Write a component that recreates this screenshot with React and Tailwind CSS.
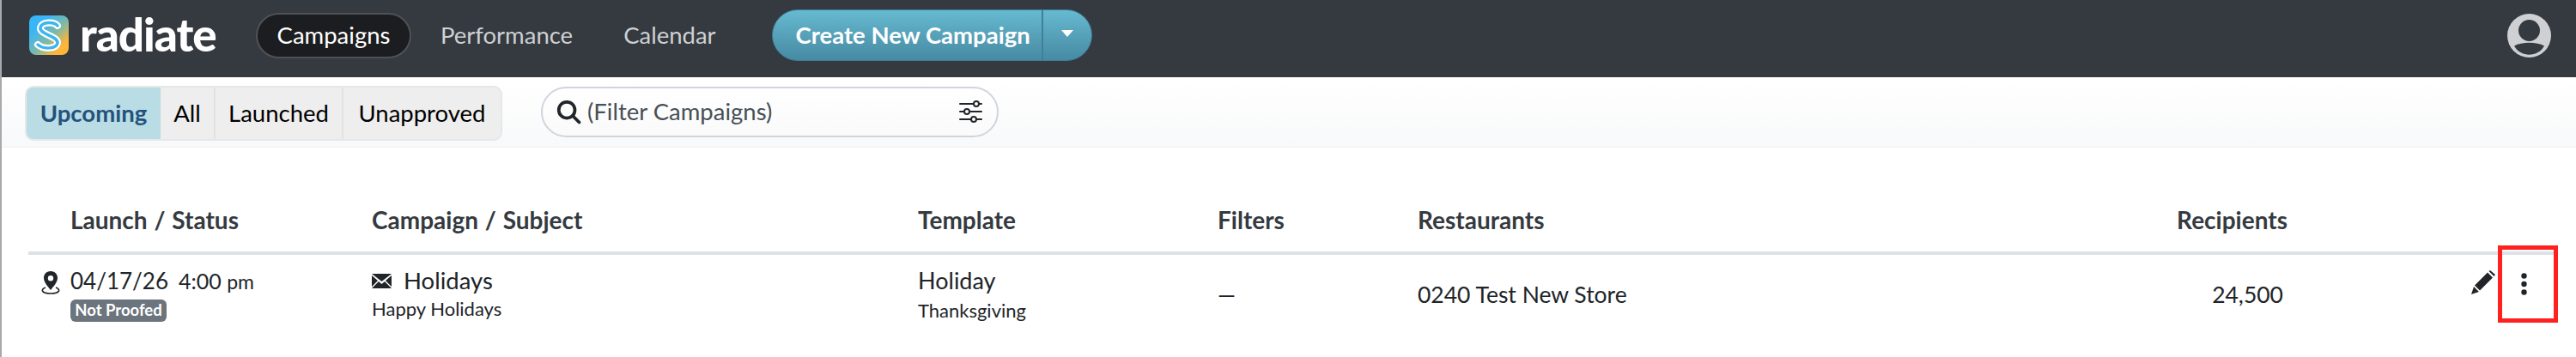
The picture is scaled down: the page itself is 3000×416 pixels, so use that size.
import React from "react";

function Logo() {
  return (
    <svg width="46" height="46" viewBox="0 0 46 46" className="shrink-0">
      <defs>
        <linearGradient id="lg" x1="0" y1="0" x2="1" y2="1">
          <stop offset="0.25" stopColor="#38b6f8" />
          <stop offset="0.55" stopColor="#7fb9a6" />
          <stop offset="0.8" stopColor="#fdb53a" />
        </linearGradient>
      </defs>
      <rect width="46" height="46" rx="8" fill="url(#lg)" />
      <path d="M33 12 C29 7 15 7 13 14 C11 22 34 24 33 32 C32 39 17 40 10 34" fill="none" stroke="#fff" strokeWidth="8" strokeLinecap="round" />
      <path d="M33 12 C29 7 15 7 13 14 C11 22 34 24 33 32 C32 39 17 40 10 34" fill="none" stroke="#3fb5ee" strokeWidth="3.5" strokeLinecap="round" />
    </svg>
  );
}

function Tab({ children, className }) {
  return <div className={"flex items-center justify-center h-full text-[27.5px] " + className}>{children}</div>;
}

function HeadCell({ className, children }) {
  return <div className={"font-bold text-[28px] text-[#343a40] " + className}>{children}</div>;
}

export default function App() {
  return (
    <div className="w-[3000px] h-[416px] bg-white overflow-hidden border-l-2 border-[#a9a9ad] font-['Lato',sans-serif] text-[#212529]">
      <header className="h-[90px] bg-[#343a40] flex items-center relative">
        <div className="ml-[32px] flex items-center mb-[8px]">
          <Logo />
          <span className="ml-[13px] text-white text-[53px] leading-none font-black tracking-[-1px] w-[157px] -mt-[4px]">radiate</span>
        </div>
        <nav className="flex items-center ml-[48px] text-[#ced0d3] text-[27.5px]">
          <div className="w-[181px] h-[53px] rounded-full bg-[#1c1d20] border-2 border-[#4f5256] text-white flex items-center justify-center -mt-[8px]">Campaigns</div>
          <div className="ml-[34px] -mt-[8px]">Performance</div>
          <div className="ml-[59px] -mt-[8px]">Calendar</div>
        </nav>
        <div className="ml-[65px] w-[373px] h-[60px] -mt-[8px] rounded-full flex bg-gradient-to-b from-[#66bad0] to-[#478aa3] border border-[#3f7f98] text-white text-[27.5px] font-bold">
          <div className="w-[315px] flex items-center justify-center border-r-2 border-[#3f819b] pl-[14px]">Create New Campaign</div>
          <div className="flex-1 flex items-center justify-center">
            <div className="w-0 h-0 border-l-[7px] border-r-[7px] border-t-[8px] border-l-transparent border-r-transparent border-t-white -mt-[4px]" />
          </div>
        </div>
        <svg className="ml-auto mr-[29px] -mt-[8px]" width="51" height="51" viewBox="0 0 51 51">
          <circle cx="25.5" cy="25.5" r="25.5" fill="#ced0d3" />
          <circle cx="25.5" cy="19.5" r="12.5" fill="#343a40" />
          <path d="M8 37.5 C17 32.5 34 32.5 43 37.5 C36 51 15 51 8 37.5 Z" fill="#343a40" />
        </svg>
      </header>

      <div className="h-[82px] bg-gradient-to-b from-white to-[#f8f9fa] border-b border-[#f0f1f2] flex items-center pl-[27px]">
        <div className="w-[556px] h-[64px] mt-[2px] rounded-[10px] bg-[#eeeeee] border-2 border-[#e6e7e8] flex items-center overflow-hidden">
          <Tab className="w-[156px] bg-[#b9dce5] text-[#23527c] font-bold">Upcoming</Tab>
          <Tab className="w-[64px] border-r-2 border-[#e2e2e2] text-black">All</Tab>
          <Tab className="w-[149px] border-r-2 border-[#e2e2e2] text-black">Launched</Tab>
          <Tab className="flex-1 text-black">Unapproved</Tab>
        </div>
        <div className="ml-[45px] w-[533px] h-[59px] rounded-full border-2 border-[#d0d5dc] flex items-center pl-[15px] pr-[16px] -mt-[1px] bg-gradient-to-b from-white to-[#fafafa]">
          <svg width="30" height="30" viewBox="0 0 24 24" fill="none" stroke="#212529" strokeWidth="3" strokeLinecap="round">
            <circle cx="10.5" cy="10.5" r="7.5" />
            <path d="M16 16 L22 22" />
          </svg>
          <span className="ml-[7px] text-[27.5px] text-[#495057]">(Filter Campaigns)</span>
          <svg className="ml-auto" width="28" height="26" viewBox="0 0 28 26" fill="none" stroke="#212529" strokeWidth="2" strokeLinecap="round">
            <path d="M1 4 H26 M1 13 H26 M1 22 H26" />
            <circle cx="20" cy="4" r="3" fill="#fff" strokeWidth="2" />
            <circle cx="9" cy="13" r="3" fill="#fff" strokeWidth="2" />
            <circle cx="17" cy="22" r="3" fill="#fff" strokeWidth="2" />
          </svg>
        </div>
      </div>

      <div className="ml-[31px] w-[2942px]">
        <div className="h-[125px] flex items-end border-b-4 border-[#dee2e6] pb-[16px] relative">
          <HeadCell className="ml-[49px] w-[351px] whitespace-pre [word-spacing:1px]">Launch / Status</HeadCell>
          <HeadCell className="w-[636px] whitespace-pre [word-spacing:1px]">Campaign / Subject</HeadCell>
          <HeadCell className="w-[349px]">Template</HeadCell>
          <HeadCell className="w-[233px]">Filters</HeadCell>
          <HeadCell className="w-[1013px] flex justify-between"><span>Restaurants</span><span>Recipients</span></HeadCell>
        </div>
        <div className="flex items-start relative h-[119px]">
          <div className="w-[49px] pt-[19px] pl-[15px]">
            <svg width="22" height="27" viewBox="0 0 22 27" fill="#212529">
              <path fillRule="evenodd" d="M11 0 C5.5 0 3 4 3 8 C3 13 8 18 11 22 C14 18 19 13 19 8 C19 4 16.5 0 11 0 Z M11 5 A3.2 3.2 0 1 1 11 11.4 A3.2 3.2 0 1 1 11 5 Z" />
              <path d="M5 19 C-1 21 0 26 11 26 C22 26 23 21 17 19" fill="none" stroke="#212529" strokeWidth="1.6" />
            </svg>
          </div>
          <div className="w-[351px] pt-[12px]">
            <div className="text-[26px] leading-[36px] whitespace-pre">04/17/26<span className="ml-[12px] text-[25px]">4:00 <span className="text-[23px]">pm</span></span></div>
            <div className="mt-[3px] w-[112px] h-[26px] rounded-[6px] bg-[#6c757d] text-white text-[18.5px] font-bold flex items-center justify-center">Not Proofed</div>
          </div>
          <div className="w-[636px] pt-[12px]">
            <div className="flex items-center text-[27.5px] leading-[36px]">
              <svg width="23" height="17" viewBox="0 0 23 17" fill="#212529" className="mr-[14px]">
                <path d="M0 0 H23 L11.5 9 Z" />
                <path d="M0 2 L7 8 L0 15 Z M23 2 L16 8 L23 15 Z" />
                <path d="M8 9 L11.5 12 L15 9 L23 17 H0 Z" />
              </svg>
              Holidays
            </div>
            <div className="mt-[1px] text-[22px] leading-[28px]">Happy Holidays</div>
          </div>
          <div className="w-[349px] pt-[12px]">
            <div className="text-[27px] leading-[36px]">Holiday</div>
            <div className="mt-[3px] text-[22px] leading-[28px]">Thanksgiving</div>
          </div>
          <div className="w-[233px] pt-[28px] text-[26.5px] leading-[36px]">—</div>
          <div className="w-[923px] pt-[28px] text-[26.5px] leading-[36px]">0240 Test New Store</div>
          <div className="w-[85px] pt-[28px] text-[26.5px] leading-[36px] text-right">24,500</div>
          <svg className="absolute left-[2845px] top-[18px]" width="28" height="28" viewBox="0 0 28 28" fill="#212529">
            <path d="M0 28 L3 19 L9 25 Z M4 17.5 L19 2.5 L25 8.5 L10 23.5 Z M20.5 1 L22 0 L28 5 L26.5 7 Z" />
          </svg>
          <svg className="absolute left-[2903px] top-[21px]" width="7" height="26" viewBox="0 0 7 26" fill="#212529">
            <circle cx="3.5" cy="3.5" r="3.2" /><circle cx="3.5" cy="13" r="3.2" /><circle cx="3.5" cy="22.5" r="3.2" />
          </svg>
          <div className="absolute left-[2876px] top-[-11px] w-[70px] h-[90px] border-[5px] border-[#ff2020]" />
        </div>
      </div>
    </div>
  );
}
